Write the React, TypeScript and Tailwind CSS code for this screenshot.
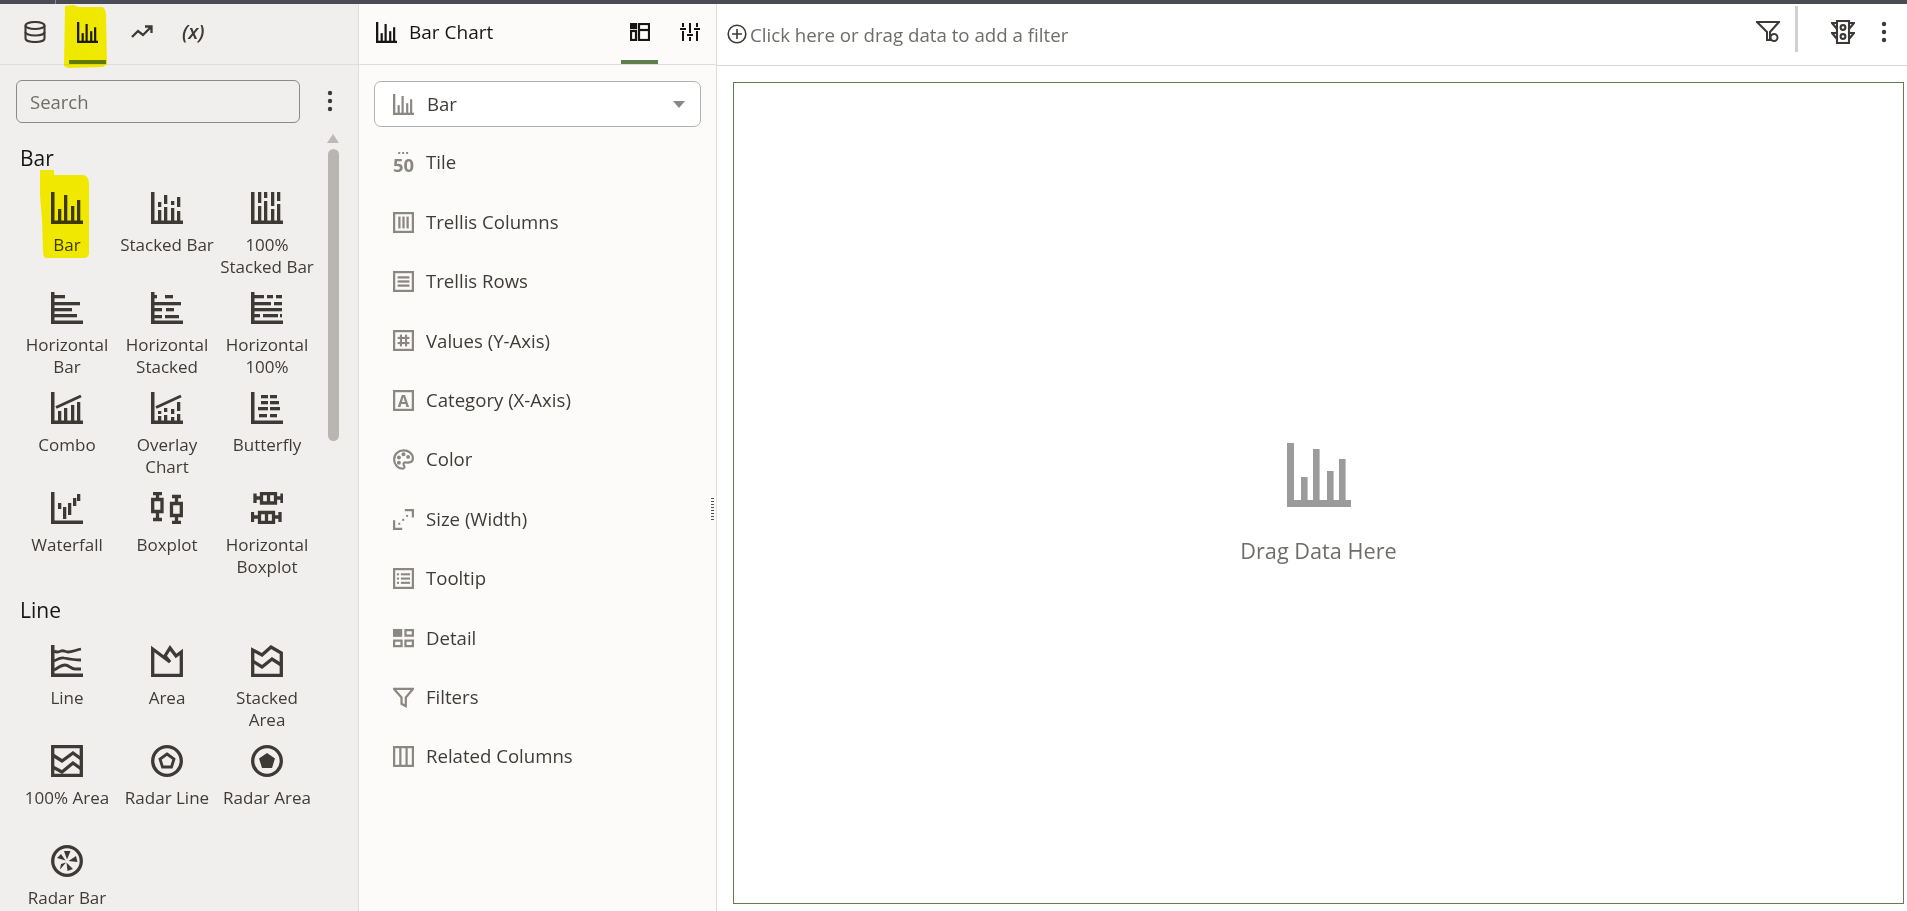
import React from "react";

const F = "font-['Open_Sans','Noto_Sans',sans-serif]";

type R = [number, number, number, number];
const Rects = ({ items }: { items: R[] }) => (
  <>
    {items.map((r, i) => (
      <rect key={i} x={r[0]} y={r[1]} width={r[2]} height={r[3]} />
    ))}
  </>
);

const Ico = ({ children, size = 32, className = "" }: { children: React.ReactNode; size?: number; className?: string }) => (
  <svg viewBox="0 0 32 32" width={size} height={size} fill="currentColor" className={"shrink-0 " + className}>
    {children}
  </svg>
);

const axis: R[] = [[0, 0, 3.5, 32], [0, 28.5, 32, 3.5]];

const BarI = () => <Rects items={[...axis, [7, 17, 3.3, 12], [13, 3, 3.3, 26], [20, 14, 3.3, 15], [26, 8, 3.3, 21]]} />;
const StackedI = () => (
  <Rects items={[...axis, [7, 10, 3.3, 5], [7, 18, 3.3, 11], [13, 3, 3.3, 9], [13, 15, 3.3, 14], [20, 9, 3.3, 4], [20, 16, 3.3, 13], [26, 5, 3.3, 10], [26, 19, 3.3, 10]]} />
);
const Stacked100I = () => (
  <Rects items={[...axis, [7, 0, 3.3, 11], [7, 14, 3.3, 15], [13, 0, 3.3, 6], [13, 9, 3.3, 20], [20, 0, 3.3, 14], [20, 17, 3.3, 12], [26, 0, 3.3, 9], [26, 12, 3.3, 17]]} />
);
const HBarI = () => <Rects items={[...axis, [3, 3, 11, 3.3], [3, 10, 26, 3.3], [3, 16, 18, 3.3], [3, 22, 23, 3.3]]} />;
const HStackI = () => (
  <Rects items={[...axis, [3, 3, 3, 3.3], [14, 3, 8, 3.3], [3, 10, 27, 3.3], [3, 16, 8, 3.3], [15, 16, 8, 3.3], [3, 23, 8, 3.3], [14, 23, 14, 3.3]]} />
);
const H100I = () => (
  <Rects items={[...axis, [3, 3, 10, 3.3], [16, 3, 6, 3.3], [25, 3, 6, 3.3], [3, 10, 17, 3.3], [23, 10, 8, 3.3], [3, 16, 28, 3.3], [3, 22, 6, 3.3], [12, 22, 15, 3.3], [29, 22, 2, 3.3]]} />
);
const Trend = () => <path d="M5 15.5 L30 4" stroke="currentColor" strokeWidth="3" fill="none" />;
const ComboI = () => (
  <>
    <Rects items={[...axis, [7, 19, 3.3, 10], [13, 16, 3.3, 13], [20, 13, 3.3, 16], [26, 10, 3.3, 19]]} />
    <Trend />
  </>
);
const OverlayI = () => (
  <>
    <Rects items={[...axis, [7, 19, 3.3, 3], [7, 24, 3.3, 5], [13, 16, 3.3, 4], [13, 23, 3.3, 6], [20, 17, 3.3, 5], [20, 25, 3.3, 4], [26, 10, 3.3, 9], [26, 22, 3.3, 7]]} />
    <Trend />
  </>
);
const ButterflyI = () => (
  <Rects
    items={[
      ...axis,
      [10, 3, 7, 3.3], [19, 3, 7, 3.3],
      [10, 9, 7, 3.3], [19, 9, 9, 3.3],
      [7, 15, 10, 3.3], [19, 15, 10, 3.3],
      [8, 22, 8, 3.3], [19, 22, 7, 3.3],
    ]}
  />
);
const WaterfallI = () => (
  <Rects items={[...axis, [7, 11, 3.3, 6], [12, 15, 3.3, 12], [17, 11, 3.3, 12], [22, 6, 3.3, 8], [26, 2, 3.3, 7]]} />
);
const BoxplotI = () => (
  <g fill="none" stroke="currentColor" strokeWidth="3.3">
    <path d="M2 1.5 H11 M6.5 1.5 V7 M1.7 7.5 H11 V19.5 H1.7 Z M6.5 19.5 V27 M2 27.5 H11" />
    <path d="M21 4.5 H30 M25.5 4.5 V10 M20.5 11.5 H30.3 V23.5 H20.5 Z M25.5 23.5 V30 M21 30.3 H30" />
  </g>
);
const HBoxplotI = () => (
  <g fill="none" stroke="currentColor" strokeWidth="3.3">
    <path d="M4 1.5 V11 M4 6 H10 M10.5 1.7 H24.5 V11 H10.5 Z M17.5 1.7 V11 M24.5 6 H31 M31 1.5 V11" />
    <path d="M1.5 20 V30 M1.5 25 H8 M8.5 20.5 H22.5 V30.3 H8.5 Z M15.5 20.5 V30.3 M22.5 25 H29 M29 20 V30" />
  </g>
);
const LineI = () => (
  <>
    <Rects items={axis} />
    <g fill="none" stroke="currentColor" strokeWidth="2.8">
      <path d="M3 6 C6 8 8 7 10 6 C13 5 14 7 17 7 C21 7 25 5 30 4" />
      <path d="M3 16 C7 14 10 12 13 13 C18 14 24 15 30 15" />
      <path d="M3 25 C7 23 10 20 14 20 C18 20 20 24 24 24 L30 24" />
    </g>
  </>
);
const AreaI = () => (
  <g fill="none" stroke="currentColor" strokeWidth="3.3">
    <path d="M1.7 4 V30.3 H30.3 V7 L25 11 L19 3 L14 11 L19 17 Z" />
  </g>
);
const StackedAreaI = () => (
  <g fill="none" stroke="currentColor" strokeWidth="3.3">
    <path d="M1.7 5 L11 10 L20 2 L30.3 8 V30.3 H1.7 Z" />
    <path d="M1.7 16 L11 22 L21 14 L30.3 20" />
  </g>
);
const Area100I = () => (
  <g fill="none" stroke="currentColor" strokeWidth="3.3">
    <path d="M1.7 1.7 H30.3 V30.3 H1.7 Z" />
    <path d="M1.7 10 L11 16 L22 8 L30.3 14" />
    <path d="M1.7 22 L11 27 L22 18 L30.3 24" />
  </g>
);
const RadarLineI = () => (
  <g fill="none" stroke="currentColor" strokeWidth="3.3">
    <circle cx="16" cy="16" r="14.3" />
    <path d="M16 9 L23 14 L20.5 22 H11.5 L9 14 Z" strokeWidth="2.8" />
  </g>
);
const RadarAreaI = () => (
  <>
    <circle cx="16" cy="16" r="14.3" fill="none" stroke="currentColor" strokeWidth="3.3" />
    <path d="M16 8 L24 13.5 L21 23 H11 L8 13.5 Z" />
  </>
);
const RadarBarI = () => (
  <>
    <circle cx="16" cy="16" r="14.3" fill="none" stroke="currentColor" strokeWidth="3.3" />
    <path d="M13 6 H19.5 L16 14.5 Z M25 11 L26.5 17 L17.5 16 Z M22 24 L16.5 26 L15.5 17.5 Z M9 24.5 L10 19 L15 17.5 Z M6 13 L10 9 L14.5 15.5 Z" />
  </>
);

const sections: { title: string; items: [string, React.ComponentType][] }[] = [
  {
    title: "Bar",
    items: [
      ["Bar", BarI],
      ["Stacked Bar", StackedI],
      ["100%\nStacked Bar", Stacked100I],
      ["Horizontal\nBar", HBarI],
      ["Horizontal\nStacked", HStackI],
      ["Horizontal\n100%", H100I],
      ["Combo", ComboI],
      ["Overlay\nChart", OverlayI],
      ["Butterfly", ButterflyI],
      ["Waterfall", WaterfallI],
      ["Boxplot", BoxplotI],
      ["Horizontal\nBoxplot", HBoxplotI],
    ],
  },
  {
    title: "Line",
    items: [
      ["Line", LineI],
      ["Area", AreaI],
      ["Stacked\nArea", StackedAreaI],
      ["100% Area", Area100I],
      ["Radar Line", RadarLineI],
      ["Radar Area", RadarAreaI],
      ["Radar Bar", RadarBarI],
    ],
  },
];

const boxS = { fill: "none", stroke: "currentColor", strokeWidth: 3.4 };
const Box = () => <rect x="1.7" y="1.7" width="28.6" height="28.6" {...boxS} />;

const rows: [string, React.ReactNode][] = [
  [
    "Tile",
    <>
      <Rects items={[[8, 0, 3, 3], [14, 0, 3, 3], [20, 0, 3, 3]]} />
      <text x="16" y="30" textAnchor="middle" fontSize="28" fontWeight="700" fontFamily="'Open Sans',sans-serif">50</text>
    </>,
  ],
  ["Trellis Columns", <><Box /><Rects items={[[8, 7, 3.5, 18], [14.25, 7, 3.5, 18], [20.5, 7, 3.5, 18]]} /></>],
  ["Trellis Rows", <><Box /><Rects items={[[7, 8, 18, 3.5], [7, 14.25, 18, 3.5], [7, 20.5, 18, 3.5]]} /></>],
  ["Values (Y-Axis)", <><Box /><Rects items={[[10.5, 7, 3.2, 18], [18.3, 7, 3.2, 18], [7, 10.5, 18, 3.2], [7, 18.3, 18, 3.2]]} /></>],
  [
    "Category (X-Axis)",
    <>
      <Box />
      <text x="16" y="26" textAnchor="middle" fontSize="25" fontWeight="700" fontFamily="'Open Sans',sans-serif">A</text>
    </>,
  ],
  [
    "Color",
    <>
      <path d="M16 2 C8 2 1.7 8 1.7 16 C1.7 24 8 30 14 30 C18 30 18 27 16.5 25 C15 22 17 20 20 20.5 C25 21 30.3 20 30.3 14 C30.3 7 24 2 16 2 Z" {...boxS} />
      <circle cx="9" cy="13" r="3" />
      <circle cx="16" cy="8" r="3" />
      <circle cx="23" cy="12" r="3" />
      <circle cx="9" cy="21" r="3" />
    </>,
  ],
  [
    "Size (Width)",
    <>
      <path d="M1.7 17 V30.3 H14" {...boxS} />
      <path d="M18 1.7 H30.3 V13" {...boxS} />
      <Rects items={[[8, 21, 3, 3], [14, 15, 3, 3], [20, 9, 3, 3]]} />
    </>,
  ],
  ["Tooltip", <><Box /><Rects items={[[6, 8, 3.2, 3.2], [12, 8, 14, 3.2], [6, 14.5, 3.2, 3.2], [12, 14.5, 14, 3.2], [6, 21, 3.2, 3.2], [12, 21, 14, 3.2]]} /></>],
  [
    "Detail",
    <>
      <Rects items={[[0, 3, 14, 12]]} />
      <path d="M19 4.7 H30.3 V13.3 H19 Z M1.7 20.7 H13 V29.3 H1.7 Z M19 20.7 H30.3 V29.3 H19 Z" {...boxS} />
    </>,
  ],
  ["Filters", <path d="M1.5 3 H30.5 L19.5 16 V29 L13 25.5 V16 Z" {...boxS} />],
  ["Related Columns", <><Box /><Rects items={[[9.5, 2, 3.4, 28], [19, 2, 3.4, 28]]} /></>],
];

const Dots = ({ className = "" }: { className?: string }) => (
  <svg viewBox="0 0 6 22" width="6" height="22" fill="currentColor" className={className}>
    <circle cx="3" cy="3" r="2.2" />
    <circle cx="3" cy="11" r="2.2" />
    <circle cx="3" cy="19" r="2.2" />
  </svg>
);

export default function App() {
  return (
    <div className={"w-[1907px] h-[911px] overflow-hidden flex flex-col bg-white text-[#3f3b38] " + F}>
      <div className="h-1 shrink-0 bg-[#4a4c55]">
        <div className="h-1 w-[56px] border-r border-[#8a8c94]" />
      </div>
      <div className="flex flex-1 min-h-0">
        {/* Left palette */}
        <aside className="relative w-[359px] shrink-0 bg-[#f1efed] border-r border-[#e0dedb] flex flex-col">
          <div className="h-[61px] shrink-0 border-b border-[#dfdddb] flex items-center text-[#3d3935]">
            <div className="w-[69px] flex justify-center -mt-1">
              <svg viewBox="0 0 22 22" width="22" height="22" fill="none" stroke="currentColor" strokeWidth="2.1">
                <ellipse cx="11" cy="4.5" rx="9.5" ry="3.5" />
                <path d="M1.5 4.5 V17.5 C1.5 19.5 5.5 21 11 21 C16.5 21 20.5 19.5 20.5 17.5 V4.5" />
                <path d="M1.5 11 C1.5 13 5.5 14.5 11 14.5 C16.5 14.5 20.5 13 20.5 11" />
              </svg>
            </div>
            <div className="relative w-[37px] h-full flex justify-center items-center text-[#1c1a18]">
              <Ico size={21} className="-mt-1"><BarI /></Ico>
              <div className="absolute left-0 right-0 bottom-0 h-1 bg-[#5f7d4f]" />
            </div>
            <div className="ml-[25px] -mt-1">
              <svg viewBox="0 0 22 14" width="22" height="14" fill="none" stroke="currentColor" strokeWidth="2.3">
                <path d="M1 12 L7 6 L12 10 L20 2 M14 1.5 H20.5 V8" />
              </svg>
            </div>
            <span className="ml-[29px] -mt-1 text-[20px] italic font-semibold leading-none text-[#3d3935]">(x)</span>
          </div>

          <div className="flex items-center pl-4 pt-[15px] h-[57px] shrink-0">
            <div className="w-[284px] h-[43px] rounded-[6px] border border-[#8c8a87] px-[13px] pt-[2px] flex items-center text-[18.5px] text-[#6f6c69]">
              Search
            </div>
            <Dots className="ml-[27px] text-[#3d3935]" />
          </div>

          <div className="relative flex-1 min-h-0 overflow-hidden">
            {/* Scrollbar */}
            <div className="absolute left-[327px] top-[12px] w-[12px] flex flex-col items-center gap-[6px]">
              <div className="w-0 h-0 border-x-[6px] border-x-transparent border-b-[9px] border-b-[#bdbab6]" />
              <div className="w-[11px] h-[292px] rounded-[6px] bg-[#b9b6b2]" />
            </div>
            {sections.map((s, si) => (
              <section key={s.title}>
                <h2 className={"h-[30px] pl-5 text-[21px] leading-[30px] text-[#161513] " + (si === 0 ? "mt-[21px] mb-[19px]" : "mt-[3px] mb-[20px]")}>
                  {s.title}
                </h2>
                <div className="grid grid-cols-[100px_100px_100px] auto-rows-[100px] pl-[17px]">
                  {s.items.map(([label, I]) => (
                    <div key={label} className="flex flex-col items-center">
                      <span className="text-[#3d3935]">
                        <Ico><I /></Ico>
                      </span>
                      <span className="mt-[10px] text-center whitespace-pre-line text-[17px] leading-[22px]">{label}</span>
                    </div>
                  ))}
                </div>
              </section>
            ))}
          </div>

          {/* Hand-drawn marker highlights */}
          <svg className="absolute left-0 top-[-4px] mix-blend-multiply pointer-events-none" width="358" height="270" fill="#fff800">
            <path d="M65 6 L74 5 L78 7 L103 7 Q106 10 106 14 L107 64 L103 67 L68 68 L64 66 Z" />
            <path d="M40 170 L54 170 L54 175 L84 175 Q89 177 89 184 L89 254 Q88 258 84 258 L46 258 Q43 258 43 250 L42 220 L40 195 Z" />
          </svg>
        </aside>

        {/* Middle properties */}
        <div className="relative w-[358px] shrink-0 bg-[#fcfbfa] border-r border-[#e0dedb] flex flex-col">
          <div className="h-[61px] shrink-0 border-b border-[#dfdddb] flex items-center pl-[17px] pr-[16px] text-[#161513]">
            <Ico size={21} className="-mt-1"><BarI /></Ico>
            <span className="ml-[12px] -mt-1 text-[19px] leading-none">Bar Chart</span>
            <div className="relative ml-auto w-[37px] h-full flex justify-center items-center">
              <svg viewBox="0 0 20 18" width="20" height="18" fill="none" stroke="currentColor" strokeWidth="2.2" className="-mt-1">
                <rect x="1" y="1" width="5" height="4" fill="currentColor" />
                <rect x="1" y="8" width="5" height="9" />
                <rect x="9" y="1" width="10" height="16" />
                <path d="M9 7 H19" />
              </svg>
              <div className="absolute left-0 right-0 bottom-0 h-1 bg-[#5f7d4f]" />
            </div>
            <svg viewBox="0 0 20 18" width="20" height="18" fill="none" stroke="currentColor" strokeWidth="2" className="ml-[22px] -mt-1">
              <path d="M3 0 V4 M3 8 V18 M0 6 H6 M10 0 V10 M10 14 V18 M7 12 H13 M17 0 V4 M17 8 V18 M14 6 H20" />
            </svg>
          </div>

          <div className="mt-[16px] ml-[15px] w-[327px] h-[46px] shrink-0 bg-white border border-[#b3b1ae] rounded-[7px] flex items-center pl-[18px] pr-[15px]">
            <span className="text-[#8b8782]"><Ico size={21}><BarI /></Ico></span>
            <span className="ml-[13px] text-[18.6px] flex-1">Bar</span>
            <div className="w-0 h-0 border-x-[6.5px] border-x-transparent border-t-[7px] border-t-[#8b8782]" />
          </div>

          <div className="mt-[6px] pl-[34px]">
            {rows.map(([label, icon]) => (
              <div key={label} className="h-[59.4px] flex items-center">
                <span className="text-[#8b8782]"><Ico size={21}>{icon}</Ico></span>
                <span className="ml-[12px] text-[18.6px] leading-none">{label}</span>
              </div>
            ))}
          </div>

          <div className="absolute right-[2px] top-[494px] w-[3px] h-[24px] bg-[repeating-linear-gradient(to_bottom,#55524e_0,#55524e_1px,transparent_1px,transparent_3px)]" />
        </div>

        {/* Right canvas */}
        <main className="flex-1 min-w-0 flex flex-col bg-white">
          <div className="h-[62px] shrink-0 border-b border-[#d8d6d3] flex items-center pl-[10px]">
            <svg viewBox="0 0 20 20" width="20" height="20" fill="none" stroke="#3d3935" strokeWidth="1.6" className="-mt-[1px]">
              <circle cx="10" cy="10" r="8.8" />
              <path d="M10 5 V15 M5 10 H15" />
            </svg>
            <span className="ml-[3px] pt-[2px] text-[18.7px] leading-none text-[#6f6c69]">Click here or drag data to add a filter</span>
            <div className="flex-1" />
            <svg viewBox="0 0 24 24" width="24" height="24" fill="none" stroke="#3d3935" strokeWidth="2" className="-mt-[5px]">
              <path d="M1 2 H23 L14 12 V20 H11 V12 Z" />
              <circle cx="18" cy="17.5" r="3.5" />
            </svg>
            <div className="ml-[15px] w-[3px] h-[46px] -mt-3 bg-[#d2cfcc]" />
            <svg viewBox="0 0 24 24" width="24" height="24" fill="none" stroke="#3d3935" strokeWidth="2.1" className="ml-[33px] -mt-[5px]">
              <rect x="6" y="1" width="12" height="22" />
              <circle cx="12" cy="7.5" r="2.4" />
              <circle cx="12" cy="16.5" r="2.4" />
              <path d="M6 3 H1 L6 9 M18 3 H23 L18 9 M6 13 H1 L6 19 M18 13 H23 L18 19" />
            </svg>
            <Dots className="ml-[26px] mr-[20px] -mt-[5px] text-[#3d3935]" />
          </div>
          <div className="flex-1 min-h-0 pl-4 pr-[3px] pt-4 pb-[7px]">
            <div className="h-full border border-[#5f7d4f] flex flex-col items-center pt-[360px] text-[#9b9b9b]">
              <Ico size={64}><BarI /></Ico>
              <span className="mt-[33px] text-[21.7px] leading-none text-[#6f6c69]">Drag Data Here</span>
            </div>
          </div>
        </main>
      </div>
    </div>
  );
}
